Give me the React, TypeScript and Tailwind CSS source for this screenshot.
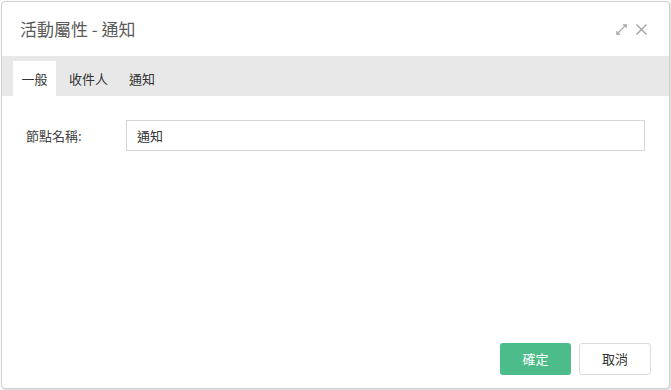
import React from "react";

export default function App() {
  return (
    <div
      className="w-[671px] h-[390px] bg-white p-px"
      style={{ fontFamily: '"Microsoft JhengHei", "Noto Sans CJK TC", "Liberation Sans", sans-serif' }}
    >
      <div className="w-full h-full border border-[#cfcfcf] rounded-[4px] flex flex-col bg-white shadow-[1px_1px_2px_rgba(0,0,0,0.15)]">
        <div className="h-[54px] flex items-center pl-[18px] pr-[21px] shrink-0">
          <div className="text-[17px] text-[#5a5a5a] flex-1">活動屬性 - 通知</div>
          <div className="flex items-center gap-[7px] text-[#999]">
            <svg width="13" height="13" viewBox="0 0 14 14" fill="none" stroke="#a0a0a0" strokeWidth="1.2">
              <path d="M2 12 L12 2" />
              <path d="M8.5 2 H12 V5.5" />
              <path d="M2 8.5 V12 H5.5" />
            </svg>
            <svg width="13" height="13" viewBox="0 0 13 13" fill="none" stroke="#a0a0a0" strokeWidth="1.3">
              <path d="M1.5 1.5 L11.5 11.5 M11.5 1.5 L1.5 11.5" />
            </svg>
          </div>
        </div>
        <div className="h-[40px] bg-[#e8e8e8] flex items-end pl-[11px] shrink-0 text-[13px] text-[#333]">
          <div className="h-[35px] w-[43px] bg-white flex items-center justify-center">一般</div>
          <div className="h-[35px] px-[13px] flex items-center">收件人</div>
          <div className="h-[35px] pl-[8px] flex items-center">通知</div>
        </div>
        <div className="flex-1 flex flex-col">
          <div className="flex items-center mt-[24px] pl-[24px] pr-[24px]">
            <div className="w-[100px] text-[13px] text-[#444]">節點名稱:</div>
            <div className="flex-1 h-[31px] border border-[#d6d6d6] flex items-center px-[10px] text-[13px] text-[#333]">
              通知
            </div>
          </div>
          <div className="flex-1" />
          <div className="flex justify-end gap-[8px] pr-[18px] pb-[13px]">
            <button className="w-[71px] h-[32px] rounded-[3px] bg-[#4cbc8a] text-white text-[13px]">確定</button>
            <button className="w-[72px] h-[32px] rounded-[3px] bg-white border border-[#dcdcdc] text-[#333] text-[13px]">取消</button>
          </div>
        </div>
      </div>
    </div>
  );
}
